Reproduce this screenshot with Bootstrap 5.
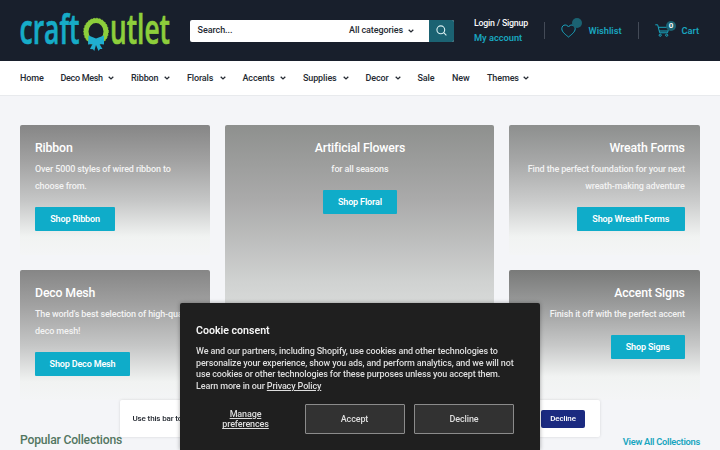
<!DOCTYPE html>
<html lang="en">
<head>
<meta charset="utf-8">
<meta name="viewport" content="width=device-width, initial-scale=1">
<title>Craft Outlet</title>
<link href="https://cdn.jsdelivr.net/npm/bootstrap@5.3.0/dist/css/bootstrap.min.css" rel="stylesheet">
<style>
body{font-family:Roboto,"Liberation Sans",sans-serif;font-size:9px;font-weight:500;line-height:17px;letter-spacing:-.13px;background:#f4f5f8;color:#252a32;height:450px;overflow:hidden}
a{color:inherit;text-decoration:none}
svg{display:block;flex:none;overflow:visible}
.top-bar{height:61px;background:#181f2c;padding:0 20px}
.logo{margin-top:9px;letter-spacing:0}
.search-box{width:264px;height:22px;margin-left:20px;background:#fff;border-radius:2px;overflow:hidden}
.search-hint{padding-left:7.5px;letter-spacing:-.05px}
.cats{padding-right:5px;letter-spacing:-.1px}
.cats-arrow{margin-right:15px}
.search-go{width:25px;height:22px;background:#1b6272}
.account{margin-left:20px;width:70px;line-height:14.5px}
.login{font-size:8.8px;letter-spacing:-.22px}
.cyan{color:#18a5bf;font-weight:600;font-size:9.3px;letter-spacing:-.04px}
.rule{width:1px;height:17px;background:#434a57}
.wish{width:93px;padding-left:16px}
.wish-label{margin-right:16.5px}
.cart{padding-left:16px}
.cart-label{padding-left:11.500px}
.count{position:absolute;width:10px;height:10px;border-radius:50%;background:#1b6272;color:#fff;font-size:8px;line-height:10px;text-align:center}
.wish .count{right:-6px;top:-6px}
.cart .count{right:-6px;top:-3px}
.menu{height:35px;background:#fff;border-bottom:1px solid #e8eaed;padding:0 20px;display:grid;grid-template-columns:40.5px 70.5px 56px 55.5px 60.5px 62.5px 52px 34.5px 35px 50px;align-items:center;white-space:nowrap}
.menu a{display:flex;align-items:center;justify-content:space-between;padding-right:17px}
.menu .wide-label{letter-spacing:-.32px}
.promos{display:grid;grid-template-columns:190.4px 269px 190.4px;column-gap:15px;row-gap:15px;grid-template-rows:130px 130px;padding:0 20px;margin-top:29.4px}
.tile{color:#fff;padding:13.8px 15px 0;border-radius:2px;background:linear-gradient(#868686 0,#a1a1a1 27%,#c5c6c6 58%,#f1f3f2 86%,#f4f5f6 100%);white-space:nowrap}
.tile.cool{background:linear-gradient(#8d8f8e 0,#a6a7a7 27%,#cacbcb 58%,#f1f3f2 86%,#f4f5f6 100%)}
.tile.deep{background:linear-gradient(#797a79 0,#9b9c9c 27%,#c7c8c8 58%,#f1f3f2 82%,#f4f5f6 100%)}
.tile.tall{grid-row:span 2;background:linear-gradient(#8e908e 0,#aaa 27%,#d0d2d1 57%,#e4e6e5 80%,#f4f5f6 100%)}
.tile h2{font-size:12.3px;line-height:18px;font-weight:500;margin:0 0 4px;letter-spacing:-.15px}
.tile p{margin:0 0 12.2px;color:#f3f3f3}
.shop{display:inline-block;background:#0facc9;color:#fff;border-radius:1px;height:24px;line-height:24.6px;text-align:center;font-weight:600;letter-spacing:-.15px}
.s-ribbon{width:80px}.s-floral{width:74px}.s-wreath{width:108px}.s-mesh{width:95px}.s-signs{width:74px}
.popular{padding:0 20px;margin-top:29.8px}
.popular h2{font-size:12.2px;font-weight:500;line-height:18px;color:#527561;margin:0;letter-spacing:-.23px}
.view-all{padding-top:3px;letter-spacing:-.28px}
.bar{left:120px;top:400px;width:480px;height:37px;background:#fff;border-radius:2px;box-shadow:0 0 3px #0002;padding:0 15px 0 12.5px;font-size:8px}
.bar-btn{width:44px;height:18px;line-height:18px;background:#1b2a80;color:#fff;border-radius:2px;text-align:center}
.consent{left:180px;top:303.4px;width:360px;height:146.6px;background:#1f1f1f;color:#dedede;padding:20.7px 16px 0;border-radius:2px 2px 0 0;box-shadow:0 0 4px #0005;line-height:11.7px;white-space:nowrap}
.consent h3{font-size:10.6px;line-height:14px;font-weight:600;color:#f5f5f5;margin:0 0 8px;letter-spacing:0}
.consent p{margin:0 0 11.5px}
.consent u{text-underline-offset:1px}
.prefs{width:99px;line-height:10.5px;text-align:center;margin-right:9.5px}
.choice{width:100px;height:30px;line-height:28px;background:#323232;border:1px solid #8b8b8b;border-radius:1px;text-align:center;margin-right:9.5px}
</style>
<script src="https://cdn.jsdelivr.net/npm/bootstrap@5.3.0/dist/js/bootstrap.bundle.min.js"></script>
</head>
<body>
<svg width="0" height="0" class="position-absolute"><defs><symbol id="chev" viewBox="0 0 6 4"><path d="M.7.7 3 2.9 5.3.7" fill="none" stroke="currentColor" stroke-width="1.3"/></symbol></defs></svg>
<header class="top-bar d-flex align-items-center">
  <a href="#" class="align-self-start"><svg class="logo" width="150" height="43" viewBox="0 0 150 43" font-family="'Open Sans',sans-serif" font-weight="600" stroke-width=".7">
    <text x="-.5" y="35" font-size="42" fill="#16acc8" stroke="#16acc8" textLength="60" lengthAdjust="spacingAndGlyphs">craft</text>
    <text x="90" y="35" font-size="42" fill="#8dce3b" stroke="#8dce3b" textLength="60" lengthAdjust="spacingAndGlyphs">utlet</text>
    <ellipse cx="76" cy="22.5" rx="9.9" ry="10.8" fill="none" stroke="#8dce3b" stroke-width="4.8"/>
    <ellipse cx="76" cy="22.5" rx="12.3" ry="13.2" fill="none" stroke="#8dce3b" stroke-width="1" stroke-dasharray="1.5 1.5"/>
    <path d="M76 29.5 68.500 26.500 68 35.500 72.500 35 70 40 73 40.200 74.300 42 76 36 78.500 42 80 40 82.500 40 79.500 35 84 35.500 84 26.500z" fill="#20aed0"/>
  </svg></a>
  <div class="search-box d-flex align-items-center">
    <span class="search-hint flex-grow-1">Search...</span><span class="cats">All categories</span>
    <svg class="cats-arrow" width="6" height="4"><use href="#chev"/></svg>
    <div class="search-go d-flex align-items-center justify-content-center"><svg width="11" height="11" viewBox="0 0 11 11" fill="none" stroke="#d9f0f2" stroke-width="1.1"><circle cx="4.8" cy="4.8" r="3.9"/><path d="m7.7 7.7 2.7 2.7"/></svg></div>
  </div>
  <div class="account"><div class="login text-light">Login / Signup</div><a href="#" class="cyan">My account</a></div>
  <div class="rule"></div>
  <a href="#" class="wish cyan d-flex align-items-center"><span class="position-relative"><svg width="15" height="14" viewBox="0 0 15 14" fill="none" stroke="currentColor"><path d="M7.5 13C5 11 .8 8 .8 4.800.8 2.400 2.300 1 4.200 1 5.800 1 7 2 7.500 3 8 2 9.200 1 10.800 1c1.900 0 3.400 1.400 3.400 3.800C14.200 8 10 11 7.500 13z"/></svg><span class="count"></span></span><span class="wish-label ms-auto">Wishlist</span></a>
  <div class="rule"></div>
  <a href="#" class="cart cyan d-flex align-items-center"><span class="position-relative"><svg width="15" height="13" viewBox="0 0 15 13" fill="none" stroke="currentColor"><path d="M.3.8h2.400l2 8h7.800l1.500-5.500H3.400M4.200 7h8.500"/><circle cx="5.200" cy="11.200" r="1.100"/><circle cx="11.700" cy="11.200" r="1.100"/></svg><span class="count">0</span></span><span class="cart-label">Cart</span></a>
</header>
<nav class="menu">
  <a href="#">Home</a>
  <a href="#" class="wide-label">Deco Mesh <svg width="6" height="4"><use href="#chev"/></svg></a>
  <a href="#">Ribbon <svg width="6" height="4"><use href="#chev"/></svg></a>
  <a href="#">Florals <svg width="6" height="4"><use href="#chev"/></svg></a>
  <a href="#">Accents <svg width="6" height="4"><use href="#chev"/></svg></a>
  <a href="#">Supplies <svg width="6" height="4"><use href="#chev"/></svg></a>
  <a href="#">Decor <svg width="6" height="4"><use href="#chev"/></svg></a>
  <a href="#">Sale</a>
  <a href="#">New</a>
  <a href="#" class="pe-2">Themes <svg width="6" height="4"><use href="#chev"/></svg></a>
</nav>
<main>
  <section class="promos">
    <div class="tile"><h2>Ribbon</h2><p>Over 5000 styles of wired ribbon to<br>choose from.</p><a href="#" class="shop s-ribbon">Shop Ribbon</a></div>
    <div class="tile tall text-center"><h2>Artificial Flowers</h2><p>for all seasons</p><a href="#" class="shop s-floral">Shop Floral</a></div>
    <div class="tile cool text-end"><h2>Wreath Forms</h2><p>Find the perfect foundation for your next<br>wreath-making adventure</p><a href="#" class="shop s-wreath">Shop Wreath Forms</a></div>
    <div class="tile"><h2>Deco Mesh</h2><p>The world's best selection of high-quality<br>deco mesh!</p><a href="#" class="shop s-mesh">Shop Deco Mesh</a></div>
    <div class="tile deep text-end"><h2>Accent Signs</h2><p>Finish it off with the perfect accent</p><a href="#" class="shop s-signs">Shop Signs</a></div>
  </section>
  <section class="popular d-flex justify-content-between align-items-center"><h2>Popular Collections</h2><a href="#" class="view-all cyan">View All Collections</a></section>
</main>
<div class="bar position-fixed d-flex align-items-center justify-content-between"><span>Use this bar to</span><a href="#" class="bar-btn">Decline</a></div>
<div class="consent position-fixed" role="dialog">
  <h3>Cookie consent</h3>
  <p>We and our partners, including Shopify, use cookies and other technologies to<br>personalize your experience, show you ads, and perform analytics, and we will not<br>use cookies or other technologies for these purposes unless you accept them.<br>Learn more in our <u>Privacy Policy</u></p>
  <div class="d-flex align-items-center"><a href="#" class="prefs"><u>Manage<br>preferences</u></a><a href="#" class="choice">Accept</a><a href="#" class="choice">Decline</a></div>
</div>
</body>
</html>
